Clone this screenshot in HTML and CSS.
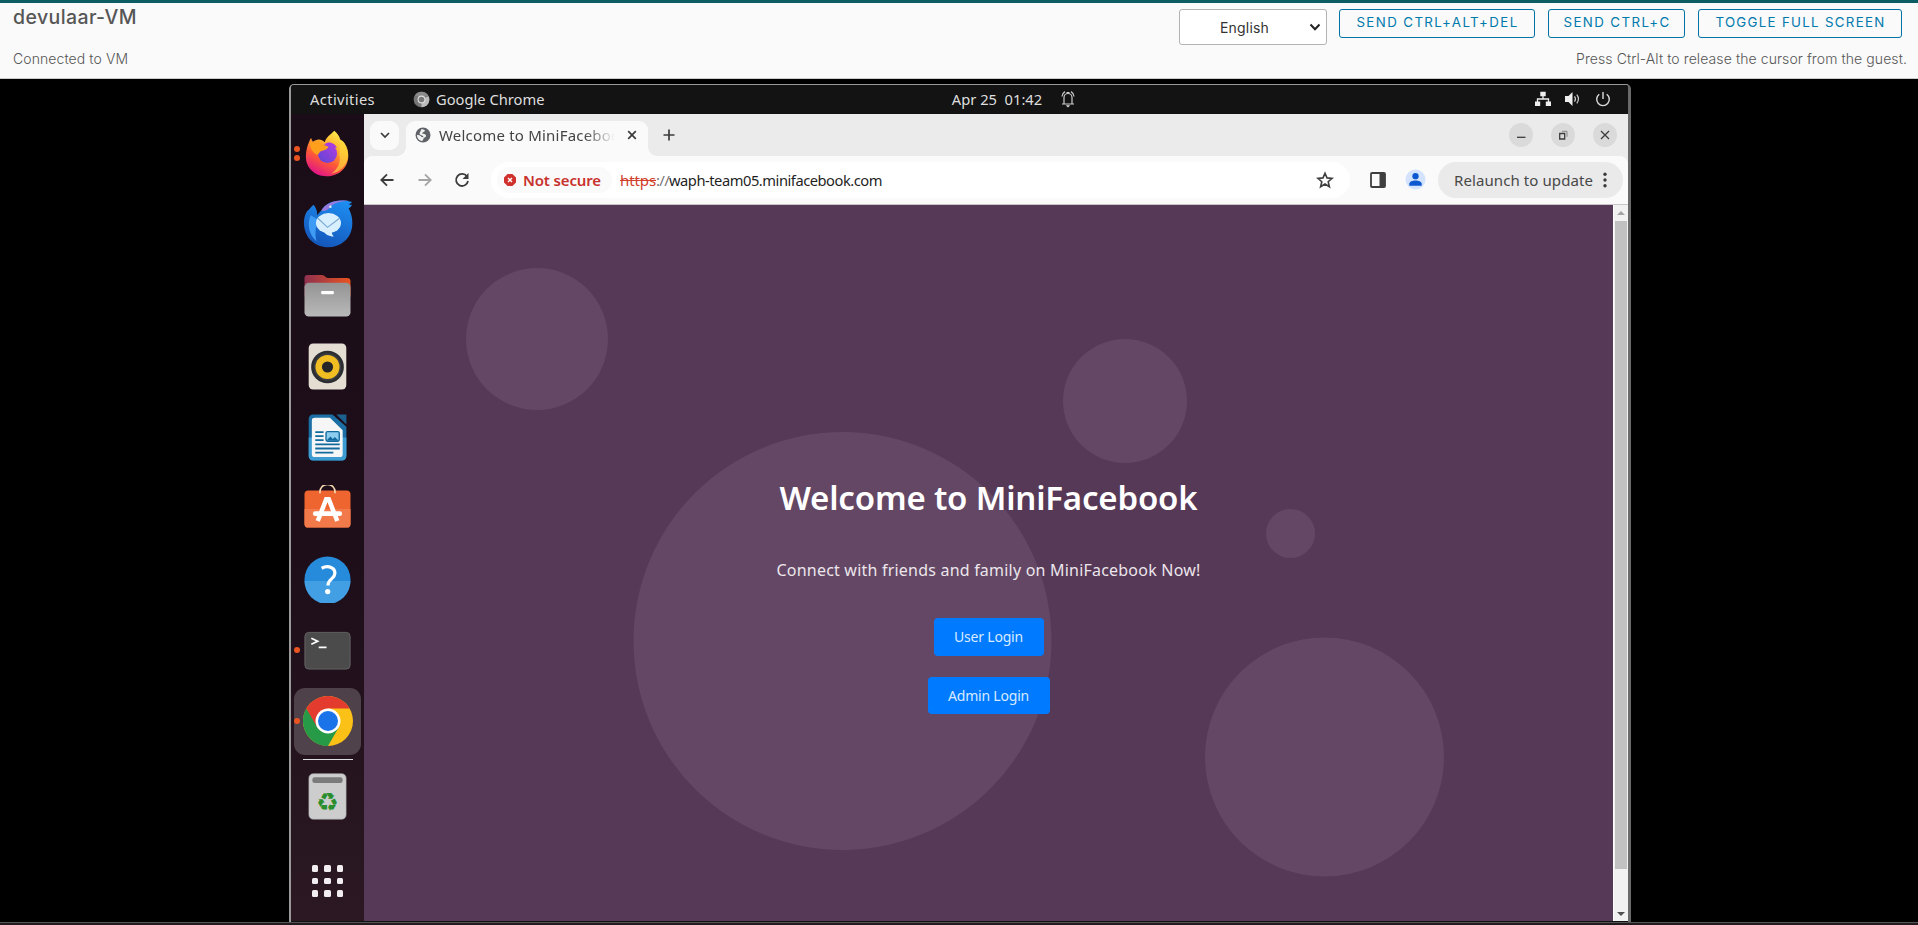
FILE: index.html
```html
<!DOCTYPE html>
<html lang="en">
<head>
<meta charset="utf-8">
<title>devulaar-VM</title>
<link rel="stylesheet" href="styles.css">
</head>
<body>
<header class="console-bar">
  <div class="console-info">
    <h1 class="vm-name">devulaar-VM</h1>
    <p class="vm-status">Connected to VM</p>
  </div>
  <div class="console-side">
    <div class="console-actions">
      <div class="language"><span>English</span>
        <svg class="caret" viewBox="0 0 12 8"><path d="M1.5 1.5 6 6.2 10.500 1.500"/></svg>
      </div>
      <button class="action action-cad">SEND CTRL+ALT+DEL</button>
      <button class="action action-cc">SEND CTRL+C</button>
      <button class="action action-fs">TOGGLE FULL SCREEN</button>
    </div>
    <p class="release-hint">Press Ctrl-Alt to release the cursor from the guest.</p>
  </div>
</header>
<main class="stage">
  <section class="vm">
    <div class="panel">
      <div class="panel-left">
        <span class="activities">Activities</span>
        <svg class="panel-chrome" viewBox="0 0 18 18"><circle cx="9" cy="9" r="8.300" fill="#777"/><path d="M9 9 16.500 5.500A8.300 8.300 0 0 1 9 17.300z" fill="#bbb"/><path d="M1.800 5A8.300 8.300 0 0 1 16.500 5.500L9 5.500z" fill="#8b8b8b"/><circle cx="9" cy="9" r="4.200" fill="#ddd"/><circle cx="9" cy="9" r="3" fill="#777"/></svg>
        <span class="app-name">Google Chrome</span>
      </div>
      <div class="panel-clock">
        <span class="clock">Apr 25&nbsp; 01:42</span>
        <svg class="bell" viewBox="0 0 16 18"><path d="M2 14h12M4 13.500V7.500a4 4 0 0 1 8 0v6M6.500 2.500h3M2 6.500C2.300 4 3.300 2.500 5 1.600M14 6.500c-.3-2.500-1.300-4-3-4.900"/><path d="M5.800 15.200h4.400L8 17.600z" class="solid"/></svg>
      </div>
      <div class="panel-right">
        <svg viewBox="0 0 16 16"><path d="M5.300.8h5.400v4.500H5.300zM0 10.500h5.200V15H0zM10.800 10.500H16V15h-5.200z" fill="#eee"/><path d="M8 5v3M2.500 11V8h11v3" fill="none" stroke="#eee" stroke-width="1.300"/></svg>
        <svg viewBox="0 0 16 16"><path d="M0 5h3.500L7.500 1v14L3.500 11H0z" fill="#eee"/><path d="M9.500 5.300q2 2.700 0 5.400M11.800 3.700q3.300 4.300 0 8.600" fill="none" stroke="#ccc" stroke-width="1.200"/></svg>
        <svg viewBox="0 0 16 16"><path d="M4.300 3.200a6.300 6.300 0 1 0 7.400 0M8 1v7" fill="none" stroke="#ddd" stroke-width="1.400"/></svg>
      </div>
    </div>
    <div class="desktop">
      <nav class="dock">
        <div class="dock-item two">
          <svg viewBox="0 0 48 48"><defs><linearGradient id="ff" x1=".8" y1="0" x2=".3" y2="1"><stop offset="0" stop-color="#fff44f"/><stop offset=".35" stop-color="#ffb02e"/><stop offset=".65" stop-color="#ff5a36"/><stop offset="1" stop-color="#e0128a"/></linearGradient><linearGradient id="fp" x1="1" y1="0" x2="0" y2="1"><stop offset="0" stop-color="#b23ee0"/><stop offset="1" stop-color="#5b45d6"/></linearGradient></defs><path d="M31 .7c3.500 3 5.500 6 6 9.300 2.200.8 4 2.500 5 4.500 6.500 11 3 25-8.500 30.500C22 50.500 7 46 3 34 .8 28 2.200 18 5.500 11.500c.5-1.500 1-2.500 1.800-3.300.5 1.800 1 2.800 2 3.800 1.600-1.300 3.600-2 6-2.200 2 .3 4 1 6 2.700C22 7.500 27.500 4.500 31 .7z" fill="url(#ff)"/><path d="M37 9.500c7 5 10 14 6.500 23-3 7-9 11-15.500 12 7-5 10-12 8-20z" fill="#ffd83a" opacity=".65"/><circle cx="24" cy="24" r="9.800" fill="url(#fp)"/><path d="M22 13.500c5-2 10 .5 11.500 5-2-.7-3-.7-4-.2-2-2.500-5-3-7.500-2z" fill="#a83ae0"/><path d="M5.500 12C9 13 11 12 15 10.500c2 4 5 5 10 6.500-1 3-5 3.500-8 4.700-1.500 1-1.700 3.300-3.500 3.500C9 24 6 18 5.500 12z" fill="#ff9f1c"/></svg>
        </div>
        <div class="dock-item">
          <svg class="i52" viewBox="0 0 52 52"><defs><linearGradient id="tb" x1=".7" y1="0" x2=".3" y2="1"><stop offset="0" stop-color="#1d8cf0"/><stop offset="1" stop-color="#1454b8"/></linearGradient></defs><path d="M19 12C24 3 35-1 51 3c-2 2-3 2.300-4 2.500 1.500.5 3 .5 4 .5-1 2-2 3-3.500 3.500C54 22 52 37 43 44 33 53 17 52 8 43 0 35-1 21 4 13 7 11 9 7 11 6c3 4 4 7 3.500 11z" fill="url(#tb)"/><path d="M8 17c-4 9-2 20 6 27-2-9-1-17 3-22z" fill="#3e9cf4"/><path d="M19 12C24 4 34 0 48 2c-10 0-17 2-21 8-2 2-5 3-8 2z" fill="#9a79dc"/><circle cx="28.500" cy="8" r="1.300" fill="#d7efff"/><ellipse cx="26.500" cy="25" rx="13" ry="10.500" fill="#d8efff"/><path d="M20 32c3 5 7 7 12 7-2-2-2-4-2-6z" fill="#d8efff"/><path d="m15.500 20 10 9.500L38 20" fill="none" stroke="#79a8d0" stroke-width="1.200"/></svg>
        </div>
        <div class="dock-item">
          <svg viewBox="0 0 48 48"><defs><linearGradient id="fo"><stop offset="0" stop-color="#8f3050"/><stop offset="1" stop-color="#e95420"/></linearGradient><linearGradient id="fg" x2="0" y2="1"><stop offset="0" stop-color="#949494"/><stop offset="1" stop-color="#b9b9b9"/></linearGradient></defs><path d="M.5 6a3 3 0 0 1 3-3h15c3 0 3 3 6 3H44a3.500 3.500 0 0 1 3.500 3.500V25H.5z" fill="url(#fo)"/><rect x=".5" y="11" width="47" height="34.500" rx="4.500" fill="url(#fg)"/><rect x="17.500" y="19.300" width="13" height="3.500" rx="1" fill="#fff"/></svg>
        </div>
        <div class="dock-item">
          <svg viewBox="0 0 48 48"><rect x="4.800" y=".5" width="38.400" height="47" rx="4.500" fill="#e3ddd2"/><circle cx="24" cy="24.500" r="16.700" fill="#2b2d31"/><circle cx="24" cy="24.500" r="14" fill="#3a3c40"/><circle cx="24" cy="24.500" r="12.300" fill="#f0bd22"/><circle cx="24" cy="24.500" r="5.700" fill="#252628"/></svg>
        </div>
        <div class="dock-item">
          <svg viewBox="0 0 48 48"><path d="M9.300.5H29L43.300 13v30a4.500 4.500 0 0 1-4.500 4.500H9.300A4.500 4.500 0 0 1 4.800 43V5A4.500 4.500 0 0 1 9.300.5z" fill="#1b6fa5"/><path d="M4.800 24h38.500v19a4.500 4.500 0 0 1-4.500 4.500H9.300A4.500 4.500 0 0 1 4.800 43z" fill="#3c9bd0"/><path d="M33 .5h10.300v10.300z" fill="#1c6090"/><path d="M11 3.800h15.500L39.500 16.500V41a3 3 0 0 1-3 3H11a3 3 0 0 1-3-3V7a3 3 0 0 1 3-3.200z" fill="#f6f6f6"/><path d="M11.500 18.500h8.500M11.500 22.600h8.500M11.500 26.700h8.500M11.500 31h25M11.500 35.200h25M11.500 39.400h18.500" stroke="#136a9f" stroke-width="1.900"/><rect x="22.500" y="18" width="13.500" height="9.800" rx="1.500" fill="#8dcdf0" stroke="#136a9f" stroke-width="1.400"/><path d="m23 27 4-4 2.500 2.500 2-2 4 3.700z" fill="#136a9f"/></svg>
        </div>
        <div class="dock-item">
          <svg viewBox="0 0 48 48"><rect x=".5" y="5.500" width="47" height="38" rx="4" fill="#ee6530"/><path d="M.5 24.500h47v15a4 4 0 0 1-4 4h-39a4 4 0 0 1-4-4z" fill="#f27a4a"/><path d="M16.300 8.500V7a7.700 7.700 0 0 1 15.400 0v1.500" fill="none" stroke="#f6d8b0" stroke-width="1.700"/><path d="M14 36.800 22.700 14.500h2.600L34 36.800" fill="none" stroke="#fff" stroke-width="4.600"/><path d="M11.500 29.300h25" stroke="#fff" stroke-width="4.800" stroke-linecap="round"/></svg>
        </div>
        <div class="dock-item">
          <svg viewBox="0 0 48 48"><circle cx="24" cy="24" r="23.500" fill="#278bdc"/><path d="M.5 25.500h47a23.500 23.500 0 0 1-47 0z" fill="#429fe3"/><path d="M18 12.500c7-3.500 14-.5 13.500 5.500-.3 5.500-7 5.500-7 12" fill="none" stroke="#fff" stroke-width="3.300"/><circle cx="24.200" cy="36.300" r="2.700" fill="#fff"/></svg>
        </div>
        <div class="dock-item one">
          <svg viewBox="0 0 48 48"><rect x=".9" y="5.500" width="46.200" height="37.500" rx="4" fill="#4b4b4b" stroke="#666" stroke-width=".9"/><path d="m7.500 11.500 6.500 3-6.500 3.200M15 20.800h8" fill="none" stroke="#fff" stroke-width="1.700"/></svg>
        </div>
        <div class="dock-item one active">
          <svg class="i50" viewBox="0 0 50 50"><circle cx="25" cy="25" r="25" fill="#fbc116"/><path d="M3.350 12.500A25 25 0 0 0 25 50L35.800 31.250 25 25H12.500z" fill="#279a48"/><path d="M3.350 12.500 14.170 31.250 25 25 25 12.500H46.600A25 25 0 0 0 3.350 12.500z" fill="#e33b2e"/><circle cx="25" cy="25" r="12.500" fill="#fff"/><circle cx="25" cy="25" r="10" fill="#1a73e8"/></svg>
        </div>
        <div class="dock-rule"></div>
        <div class="dock-item">
          <svg viewBox="0 0 48 48"><rect x="5" y=".7" width="38" height="46.500" rx="4.500" fill="#cdcdcd" stroke="#aaa" stroke-width=".6"/><rect x="8.500" y="4.300" width="31" height="6" rx="2.500" fill="#7b7b7b"/><text class="recycle" x="24" y="39" text-anchor="middle">♻&#xFE0E;</text></svg>
        </div>
        <div class="app-grid"><i></i><i></i><i></i><i></i><i></i><i></i><i></i><i></i><i></i></div>
      </nav>
      <div class="browser">
        <div class="tabstrip">
          <div class="tab-search"><svg viewBox="0 0 10 10"><path d="m1 3 4 4 4-4"/></svg></div>
          <div class="tab">
            <svg class="globe" viewBox="0 0 16 16"><circle cx="8" cy="8" r="7.500" fill="#5f6368"/><path d="M6.500 2c1 .5 3 .5 3.500 1.500-.5 1.500-2.500 1.500-3 3 1.500.5 3.500.2 4 2s-2 2-2.500 3c-.3 1-.5 2-1.500 2.500C4 13.500 1.800 11 2 8c2 0 4 .5 4.500 2l2 .3C8.500 8.500 6 8.500 4.500 7 4.500 5.500 5.500 4.500 6.500 2z" fill="#f2f2f2"/></svg>
            <div class="tab-title">Welcome to MiniFacebook</div>
            <svg class="tab-close" viewBox="0 0 10 10"><path d="m1.200 1.200 7.600 7.600M8.800 1.200 1.200 8.800"/></svg>
          </div>
          <svg class="new-tab" viewBox="0 0 12 12"><path d="M6 .5v11M.5 6h11"/></svg>
          <div class="window-buttons">
            <div><svg viewBox="0 0 12 12"><path d="M2 8.300h8.500"/></svg></div>
            <div><svg viewBox="0 0 12 12"><path d="M2.700 4.500h5v5.500h-5z"/><path d="M5 2.300h5v5.500" stroke="#888" stroke-width="1"/></svg></div>
            <div><svg viewBox="0 0 12 12"><path d="m2 2 8 8M10 2l-8 8"/></svg></div>
          </div>
        </div>
        <div class="toolbar">
          <div class="nav-buttons">
            <svg viewBox="0 0 16 16"><path d="M14.500 8H2.500M8 2.300 2.300 8 8 13.700"/></svg>
            <svg class="off" viewBox="0 0 16 16"><path d="M1.500 8h12M8 2.300 13.700 8 8 13.700"/></svg>
            <svg viewBox="0 0 16 16"><path d="M13 4.500A6 6 0 1 0 14 9"/><path d="M14.500 1v6H8.500z" fill="#3c3c3c" stroke="none"/></svg>
          </div>
          <div class="omnibox">
            <div class="chip"><svg viewBox="0 0 12 12"><path d="M3.600 0h4.800L12 3.600v4.800L8.400 12H3.600L0 8.400V3.600z" fill="#d0312d"/><path d="m4 4 4 4M8 4 4 8" stroke="#fff" stroke-width="1.400"/></svg><span>Not secure</span></div>
            <div class="url"><span class="scheme">https</span><span class="slashes">://</span><span class="host">waph-team05.minifacebook.com</span></div>
            <svg class="star" viewBox="0 0 18 18"><path d="m9 2.200 2 4.700 5.100.5-3.900 3.300 1.200 5L9 13l-4.400 2.700 1.200-5L1.900 7.400 7 6.900z"/></svg>
          </div>
          <svg class="side-panel" viewBox="0 0 16 16"><rect x="1" y="1" width="14" height="14" rx="1" fill="none" stroke="#3f3f3f" stroke-width="1.800"/><path d="M9.500 1H15v14H9.500z" fill="#3f3f3f"/></svg>
          <svg class="profile" viewBox="0 0 22 22"><circle cx="11" cy="11" r="10.500" fill="#d3e3fd"/><circle cx="11" cy="7.500" r="3.300" fill="#0b57d0"/><path d="M4.500 17.500v-2c0-2.300 3.500-3.500 6.500-3.500s6.500 1.200 6.500 3.500v2z" fill="#0b57d0"/></svg>
          <div class="relaunch"><span>Relaunch to update</span><svg viewBox="0 0 4 16"><circle cx="2" cy="2.300" r="1.700"/><circle cx="2" cy="8" r="1.700"/><circle cx="2" cy="13.700" r="1.700"/></svg></div>
        </div>
        <div class="viewport">
          <div class="page">
            <svg class="bubbles" viewBox="0 0 1249 716"><circle cx="173" cy="134" r="71"/><circle cx="761" cy="196" r="62"/><circle cx="478.500" cy="436" r="209"/><circle cx="926.500" cy="328.500" r="24.500"/><circle cx="960.500" cy="552" r="119.500"/></svg>
            <div class="hero">
              <h2>Welcome to MiniFacebook</h2>
              <p>Connect with friends and family on MiniFacebook Now!</p>
              <a class="login user">User Login</a>
              <a class="login admin">Admin Login</a>
            </div>
          </div>
          <div class="scrollbar"><i class="up"></i><div class="thumb"></div><i class="down"></i></div>
        </div>
      </div>
    </div>
  </section>
</main>
<footer class="page-edge"></footer>
</body>
</html>
```
FILE: styles.css
```css
* { box-sizing: border-box; }
body { margin: 0; width: 1918px; height: 925px; overflow: hidden; background: #000; display: flex; flex-direction: column; font-family: Inter, "Liberation Sans", sans-serif; }
h1, h2, p { margin: 0; font-weight: 400; white-space: nowrap; }
svg { display: block; flex: none; }
span { white-space: nowrap; }

.console-bar { height: 79px; flex: none; background: #fafafa; border-top: 3px solid #0b5c63; border-bottom: 1px solid #ccc; display: flex; justify-content: space-between; padding: 0 11px 0 13px; color: #565656; }
.vm-name { font-size: 19.500px; font-weight: 500; line-height: 24px; padding-top: 2px; height: 46px; letter-spacing: .4px; }
.vm-status, .release-hint { font-size: 14px; font-weight: 300; line-height: 20px; letter-spacing: .09px; }
.console-actions { display: flex; padding: 6px 5px 0 0; height: 46px; align-items: flex-start; }
.console-side { display: flex; flex-direction: column; align-items: flex-end; }
.language { width: 148px; height: 36px; border: 1px solid #b3b3b3; border-radius: 3px; background: #fff; display: flex; align-items: center; padding: 0 5px 0 40px; justify-content: space-between; font-size: 14px; letter-spacing: .18px; color: #333; margin-right: 12px; }
.caret { width: 12px; height: 8px; fill: none; stroke: #222; stroke-width: 2; }
.action { height: 29px; border: 1px solid #0072a3; border-radius: 3px; background: none; color: #0079ad; font: 400 13.300px/21px Inter, sans-serif; padding: 0 0 3px 1px; text-align: center; margin-right: 13px; letter-spacing: 1.400px; white-space: nowrap; }
.action-cad { width: 196px; }
.action-cc { width: 137px; }
.action-fs { width: 204px; margin-right: 0; letter-spacing: 1.300px; }

.stage { height: 843px; flex: none; display: flex; padding: 5px 0 0 289px; }
.vm { width: 1342px; border: 1px solid #999; border-left-width: 2px; border-right: 3px solid #6a6a6a; border-bottom: 0; border-radius: 5px 5px 0 0; font-family: "Noto Sans", sans-serif; display: flex; flex-direction: column; }
.page-edge { height: 3px; background: #231b1e; border-top: 1px solid #555; }
.panel { height: 29px; background: #131313; color: #dedede; font-size: 14.700px; line-height: 27px; display: grid; grid-template-columns: 1fr auto 1fr; border-radius: 3px 3px 0 0; padding-bottom: 1px; }
.panel-left { display: flex; padding-left: 19px; align-items: center; }
.activities { letter-spacing: .38px; }
.panel-chrome { width: 17px; height: 17px; margin: 0 6px 0 38px; }
.panel-clock { display: flex; align-items: center; padding-left: 109px; }
.bell { width: 16px; height: 18px; margin-left: 18px; fill: none; stroke: #ccc; stroke-width: 1.200; }
.bell .solid { fill: #ddd; stroke: none; }
.panel-right { display: flex; justify-content: flex-end; align-items: center; gap: 14px; padding-right: 17px; }
.panel-right svg { width: 16px; height: 16px; }

.desktop { flex: 1; display: flex; min-height: 0; }
.dock { width: 73px; background: linear-gradient(#1b0d17, #1d0e19 55%, #2b1822); padding-top: 3.500px; border-bottom: 1px solid #111; }
.dock-item { height: 71px; display: flex; align-items: center; justify-content: center; position: relative; }
.dock-item svg { width: 47px; height: 47px; }
.dock-item .i52, .dock-item .i50 { width: 50px; height: 50px; }
.recycle { font: 26px "DejaVu Sans", sans-serif; fill: #2a8d2e; }
.one::before, .two::before { content: ""; position: absolute; left: 3px; top: 32.500px; width: 6px; height: 6px; border-radius: 50%; background: #e95420; }
.two::before { top: 28px; box-shadow: 0 9px #e95420; }
.active::after { content: ""; position: absolute; inset: 2px 3px; border-radius: 11px; background: rgba(255, 255, 255, .2); }
.active svg { position: relative; z-index: 1; }
.active::before { z-index: 1; }
.dock-rule { width: 50px; height: 1px; background: #ddd; margin: 2px auto 1.500px; }
.app-grid { display: grid; grid-template-columns: repeat(3, 6.500px); gap: 6px; justify-content: center; margin-top: 33px; }
.app-grid i { height: 6.500px; border-radius: 1.500px; background: #f1edf0; }

.browser { flex: 1; display: flex; flex-direction: column; min-width: 0; }
.tabstrip { height: 42px; background: #ebebeb; display: flex; padding: 6.500px 11px 0 6px; }
.tabstrip svg { fill: none; stroke: #3c3c3c; stroke-width: 1.700; }
.tab-search { width: 29px; height: 29px; border-radius: 9px; background: #fafafa; display: flex; align-items: center; justify-content: center; margin-right: 7px; }
.tab-search svg { width: 10px; height: 10px; }
.tab { position: relative; width: 242px; height: 36px; background: #fafafa; border-radius: 9px 9px 0 0; display: flex; align-items: center; padding: 0 11px 8px 9px; }
.tab::before, .tab::after { content: ""; position: absolute; bottom: .5px; width: 9px; height: 9px; }
.tab::before { left: -9px; background: radial-gradient(circle at 0 0, transparent 8.600px, #fafafa 9px); }
.tab::after { right: -9px; background: radial-gradient(circle at 100% 0, transparent 8.600px, #fafafa 9px); }
.tab .globe { width: 16px; height: 16px; stroke: none; }
.tab-title { width: 178px; margin: 0 10px 0 8px; white-space: nowrap; font-size: 15px; letter-spacing: .2px; line-height: 26px; color: #444; -webkit-mask-image: linear-gradient(90deg, #000 145px, transparent 176px); mask-image: linear-gradient(90deg, #000 145px, transparent 176px); }
.tab-close { width: 10px; height: 10px; }
.new-tab { width: 12px; height: 12px; margin: 8px 0 0 15px; }
.window-buttons { margin: 2px 0 0 auto; display: flex; gap: 18px; }
.window-buttons div { width: 24px; height: 24px; border-radius: 50%; background: #dadada; display: flex; align-items: center; justify-content: center; }
.window-buttons svg { width: 12px; height: 12px; stroke-width: 1.300; }

.toolbar { height: 49px; background: radial-gradient(circle at 9px 9px, #fafafa 9px, #ebebeb 9.500px) 0 0 / 9px 9px no-repeat, radial-gradient(circle at 0 9px, #fafafa 9px, #ebebeb 9.500px) 100% 0 / 9px 9px no-repeat, #fafafa; border-bottom: 1px solid #c9c5ca; display: flex; align-items: center; padding: 0 5.500px 1px 15px; font-size: 15px; line-height: 26px; }
.nav-buttons { display: flex; gap: 21.500px; margin-right: 21px; }
.nav-buttons svg { width: 16px; height: 16px; fill: none; stroke: #3c3c3c; stroke-width: 1.800; }
.nav-buttons .off { stroke: #a5a5a5; }
.omnibox { width: 859px; height: 36px; border-radius: 18px; background: #fff; display: flex; align-items: center; padding: 0 16px 0 6px; }
.chip { height: 26px; border-radius: 13px; background: #fafafa; width: 115px; padding-left: 7px; display: flex; align-items: center; gap: 7px; color: #c8322d; font-weight: 600; letter-spacing: -.14px; }
.chip svg { width: 12px; height: 12px; }
.url { margin-left: 8px; color: #1f1f1f; display: flex; }
.scheme { color: #d0402c; text-decoration: line-through; letter-spacing: -.1px; }
.slashes { color: #777; letter-spacing: -.73px; }
.host { font-size: 14.700px; letter-spacing: -.47px; }
.star { width: 18px; height: 18px; margin-left: auto; fill: none; stroke: #3f3f3f; stroke-width: 1.600; }
.side-panel { width: 16px; height: 16px; margin-left: 20px; }
.profile { width: 21px; height: 21px; margin-left: 19px; }
.relaunch { margin-left: auto; width: 184.500px; height: 36px; border-radius: 18px; background: #eaeaea; color: #484848; display: flex; align-items: center; justify-content: space-between; padding: 0 15.500px 0 16px; letter-spacing: .09px; }
.relaunch svg { width: 4px; height: 16px; fill: #3c3c3c; }

.viewport { flex: 1; display: flex; min-height: 0; border-bottom: 1px solid #111; }
.page { flex: 1; position: relative; background: #563857; overflow: hidden; }
.bubbles { position: absolute; left: 0; top: 0; width: 1249px; height: 716px; fill: rgba(255, 255, 255, .08); }
.hero { position: relative; display: flex; flex-direction: column; align-items: center; color: #fff; padding-top: 273px; font-family: "Noto Sans", sans-serif; }
.hero h2 { font-size: 33px; font-weight: 600; line-height: 40px; height: 81px; letter-spacing: -.19px; }
.hero p { font-size: 16px; line-height: 20px; height: 59px; padding-top: 1px; color: #ece6ec; letter-spacing: .21px; }
.login { height: 37.500px; border-radius: 4px; background: #007bff; font-size: 14px; line-height: 37px; text-align: center; color: #d8eaff; letter-spacing: -.2px; }
.user { width: 110px; margin-bottom: 21px; }
.admin { width: 122px; }
.scrollbar { width: 15px; background: #f1f1f1; display: flex; flex-direction: column; align-items: center; border-left: 1px solid #fff; }
.scrollbar i { width: 0; height: 0; border: 4px solid transparent; }
.scrollbar .up { border-bottom-color: #a3a3a3; border-top: 0; margin: 6px 0 6px; }
.scrollbar .down { border-top-color: #505050; border-bottom: 0; margin: auto 0 5px; }
.thumb { width: 12px; height: 648px; background: #c1c1c1; }
```
